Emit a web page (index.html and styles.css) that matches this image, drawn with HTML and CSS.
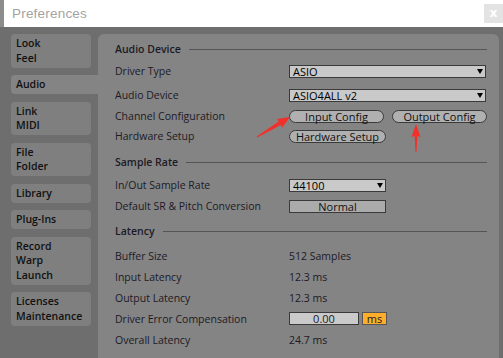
FILE: index.html
```html
<!DOCTYPE html>
<html lang="en">
<head>
    <meta charset="UTF-8">
    <title>Preferences</title>
    <link rel="stylesheet" href="styles.css">
</head>
<body>
    <div class="titlebar">
        <span class="title">Preferences</span>
        <span class="close">x</span>
    </div>

    <div class="main">
        <div class="sidebar">
            <div class="tab">Look<br>Feel</div>
            <div class="tab active">Audio</div>
            <div class="tab">Link<br>MIDI</div>
            <div class="tab">File<br>Folder</div>
            <div class="tab">Library</div>
            <div class="tab">Plug-Ins</div>
            <div class="tab">Record<br>Warp<br>Launch</div>
            <div class="tab">Licenses<br>Maintenance</div>
        </div>

        <div class="panel">
            <div class="heading"><span>Audio Device</span></div>
            <div class="row">
                <span class="label">Driver Type</span>
                <div class="dropdown wide">ASIO<span class="arrow"></span></div>
            </div>
            <div class="row gap2">
                <span class="label">Audio Device</span>
                <div class="dropdown wide">ASIO4ALL v2<span class="arrow"></span></div>
            </div>
            <div class="row short">
                <span class="label">Channel Configuration</span>
                <div class="buttons">
                    <span class="pill">Input Config</span>
                    <span class="pill">Output Config</span>
                </div>
            </div>
            <div class="row short">
                <span class="label">Hardware Setup</span>
                <span class="pill hw">Hardware Setup</span>
            </div>

            <div class="heading gap5"><span>Sample Rate</span></div>
            <div class="row gap1">
                <span class="label">In/Out Sample Rate</span>
                <div class="dropdown narrow">44100<span class="arrow"></span></div>
            </div>
            <div class="row short">
                <span class="label">Default SR &amp; Pitch Conversion</span>
                <div class="box narrow">Normal</div>
            </div>

            <div class="heading gap4"><span>Latency</span></div>
            <div class="row mid gap3">
                <span class="label">Buffer Size</span>
                <span class="value">512 Samples</span>
            </div>
            <div class="row mid">
                <span class="label">Input Latency</span>
                <span class="value">12.3 ms</span>
            </div>
            <div class="row mid">
                <span class="label">Output Latency</span>
                <span class="value">12.3 ms</span>
            </div>
            <div class="row mid">
                <span class="label">Driver Error Compensation</span>
                <div class="comp">
                    <span class="field">0.00</span>
                    <span class="unit">ms</span>
                </div>
            </div>
            <div class="row mid">
                <span class="label">Overall Latency</span>
                <span class="value">24.7 ms</span>
            </div>
        </div>
    </div>

    <!-- red annotation arrows -->
    <svg class="marks" width="503" height="358" viewBox="0 0 503 358">
        <polygon fill="#f2302a" points="290,117 282.3,127.5 280.7,124.9 257.3,137.4 256.7,136.6 278.7,121.5 277.1,118.9"/>
        <polygon fill="#f2302a" points="416,124 420.5,137 417.4,136 416.5,152 415.5,152 414.6,136 411.5,137"/>
    </svg>
</body>
</html>
```

FILE: styles.css
```css
body {
    margin: 0;
    width: 503px;
    height: 358px;
    overflow: hidden;
    background: #6e6e6e;
    font-family: "Open Sans", "DejaVu Sans", sans-serif;
    font-size: 10.5px;
    color: #1c1a26;
    position: relative;
}
.titlebar {
    height: 27px;
    background: #fff;
    border-left: 4px solid #8c8c8c;
    display: flex;
    align-items: center;
    justify-content: space-between;
}
.title {
    margin-left: 8px;
    font-size: 13.5px;
    color: #a3a3a3;
    font-family: "Liberation Sans", sans-serif;
    letter-spacing: 0.2px;
}
.close {
    width: 19px;
    height: 19px;
    background: #e3e3e3;
    color: #fff;
    font-weight: bold;
    font-size: 13px;
    line-height: 17px;
    text-align: center;
    align-self: flex-start;
    margin-top: 4px;
}
.main {
    display: flex;
    height: 331px;
}
.sidebar {
    width: 87px;
    padding: 7px 0 0 11px;
    display: flex;
    flex-direction: column;
    gap: 7.5px;
}
.tab {
    width: 80px;
    box-sizing: border-box;
    padding: 2px 5px 2.5px;
    background: #7f7f7f;
    border-radius: 4px;
    font-weight: 600;
    line-height: 14.5px;
    color: #111;
}
.tab.active {
    width: 87px;
    background: #848484;
    border-radius: 4px 0 0 4px;
}
.panel {
    flex: 1;
    margin: 7px 7px 0 0;
    background: #848484;
    border-radius: 6px 6px 0 0;
    padding: 4px 12px 0 17px;
}
.heading {
    height: 22px;
    display: flex;
    align-items: center;
    font-weight: 600;
}
.heading::after {
    content: "";
    flex: 1;
    height: 1px;
    background: #555;
    margin-left: 8px;
}
.row {
    height: 22px;
    display: flex;
    align-items: center;
}
.row.short { height: 20px; }
.row.mid { height: 21px; }
.gap1 { margin-top: 1px; }
.gap2 { margin-top: 2px; }
.gap3 { margin-top: 3px; }
.gap4 { margin-top: 4px; }
.gap5 { margin-top: 5px; }
.label {
    width: 174px;
    flex: none;
}
.dropdown, .box {
    height: 13px;
    box-sizing: border-box;
    border: 1px solid #3a3a3a;
    background: #c9c9c9;
    color: #000;
    line-height: 11px;
    padding-left: 3px;
    font-size: 11px;
    position: relative;
}
.dropdown.wide { width: 197px; }
.narrow { width: 97px; }
.arrow {
    position: absolute;
    right: 2px;
    top: 3px;
    border-left: 3.5px solid transparent;
    border-right: 3.5px solid transparent;
    border-top: 5px solid #000;
}
.box {
    background: #ababab;
    text-align: center;
    padding: 0;
    color: #111;
}
.buttons {
    display: flex;
    gap: 8px;
}
.pill {
    height: 13px;
    box-sizing: border-box;
    width: 95px;
    border: 1px solid #3a3a3a;
    border-radius: 7px;
    background: #b0b0b0;
    text-align: center;
    line-height: 11px;
    font-size: 11px;
    color: #111;
}
.pill.hw { width: 97px; }
.comp {
    display: flex;
    gap: 3px;
}
.field {
    width: 70px;
    height: 13px;
    box-sizing: border-box;
    border: 1px solid #3a3a3a;
    background: #cacaca;
    text-align: center;
    line-height: 11px;
    font-size: 11px;
}
.unit {
    width: 25px;
    height: 13px;
    box-sizing: border-box;
    border: 1px solid #555;
    background: #ffad2a;
    text-align: center;
    line-height: 11px;
    font-size: 11px;
}
.marks {
    position: absolute;
    left: 0;
    top: 0;
}
```
